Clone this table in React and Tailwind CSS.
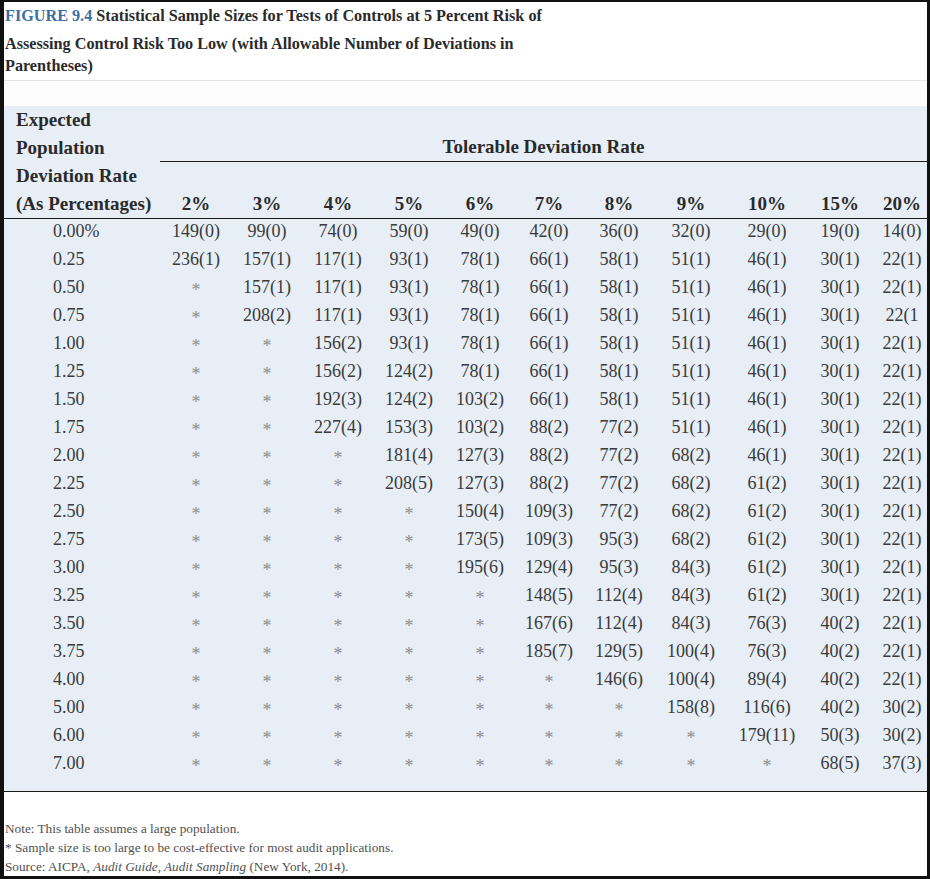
import React from "react";

const cols = ["2%", "3%", "4%", "5%", "6%", "7%", "8%", "9%", "10%", "15%", "20%"];

const rows = [
  ["0.00%", "149(0)", "99(0)", "74(0)", "59(0)", "49(0)", "42(0)", "36(0)", "32(0)", "29(0)", "19(0)", "14(0)"],
  ["0.25", "236(1)", "157(1)", "117(1)", "93(1)", "78(1)", "66(1)", "58(1)", "51(1)", "46(1)", "30(1)", "22(1)"],
  ["0.50", "*", "157(1)", "117(1)", "93(1)", "78(1)", "66(1)", "58(1)", "51(1)", "46(1)", "30(1)", "22(1)"],
  ["0.75", "*", "208(2)", "117(1)", "93(1)", "78(1)", "66(1)", "58(1)", "51(1)", "46(1)", "30(1)", "22(1"],
  ["1.00", "*", "*", "156(2)", "93(1)", "78(1)", "66(1)", "58(1)", "51(1)", "46(1)", "30(1)", "22(1)"],
  ["1.25", "*", "*", "156(2)", "124(2)", "78(1)", "66(1)", "58(1)", "51(1)", "46(1)", "30(1)", "22(1)"],
  ["1.50", "*", "*", "192(3)", "124(2)", "103(2)", "66(1)", "58(1)", "51(1)", "46(1)", "30(1)", "22(1)"],
  ["1.75", "*", "*", "227(4)", "153(3)", "103(2)", "88(2)", "77(2)", "51(1)", "46(1)", "30(1)", "22(1)"],
  ["2.00", "*", "*", "*", "181(4)", "127(3)", "88(2)", "77(2)", "68(2)", "46(1)", "30(1)", "22(1)"],
  ["2.25", "*", "*", "*", "208(5)", "127(3)", "88(2)", "77(2)", "68(2)", "61(2)", "30(1)", "22(1)"],
  ["2.50", "*", "*", "*", "*", "150(4)", "109(3)", "77(2)", "68(2)", "61(2)", "30(1)", "22(1)"],
  ["2.75", "*", "*", "*", "*", "173(5)", "109(3)", "95(3)", "68(2)", "61(2)", "30(1)", "22(1)"],
  ["3.00", "*", "*", "*", "*", "195(6)", "129(4)", "95(3)", "84(3)", "61(2)", "30(1)", "22(1)"],
  ["3.25", "*", "*", "*", "*", "*", "148(5)", "112(4)", "84(3)", "61(2)", "30(1)", "22(1)"],
  ["3.50", "*", "*", "*", "*", "*", "167(6)", "112(4)", "84(3)", "76(3)", "40(2)", "22(1)"],
  ["3.75", "*", "*", "*", "*", "*", "185(7)", "129(5)", "100(4)", "76(3)", "40(2)", "22(1)"],
  ["4.00", "*", "*", "*", "*", "*", "*", "146(6)", "100(4)", "89(4)", "40(2)", "22(1)"],
  ["5.00", "*", "*", "*", "*", "*", "*", "*", "158(8)", "116(6)", "40(2)", "30(2)"],
  ["6.00", "*", "*", "*", "*", "*", "*", "*", "*", "179(11)", "50(3)", "30(2)"],
  ["7.00", "*", "*", "*", "*", "*", "*", "*", "*", "*", "68(5)", "37(3)"],
];

const grid =
  "grid grid-cols-[156px_72px_70px_72px_70px_72px_66px_74px_70px_82px_64px_55px]";
const rightGrid =
  "grid grid-cols-[72px_70px_72px_70px_72px_66px_74px_70px_82px_64px_55px]";

export default function App() {
  return (
    <div
      className="w-[930px] h-[879px] overflow-hidden bg-white border-t-2 border-l-4 border-r-[3px] border-b-[3px] border-[#111]"
      style={{ fontFamily: '"Liberation Serif", "Times New Roman", serif' }}
    >
      <div className="pl-[1px] text-[16.2px] font-bold text-[#2a2a2a] border-b border-[#e4e4e4] h-[79px] whitespace-nowrap">
        <div className="leading-[28px]">
          <span className="text-[#3d6fa3]">FIGURE 9.4</span> Statistical Sample Sizes for Tests of Controls at 5 Percent Risk of
        </div>
        <div className="leading-[28px]">
          Assessing Control Risk Too Low (with Allowable Number of Deviations in
        </div>
        <div className="leading-[16px]">Parentheses)</div>
      </div>
      <div className="h-[26px] bg-[#fdfdfd]" />
      <div className="bg-[#e7eef6] pb-[14px] border-b border-[#1a1a1a]">
        <div className="-mt-[1px] flex border-b border-[#1a1a1a] text-[19px] font-bold text-[#2a2a2a]">
          <div className="w-[156px] shrink-0 pl-[12px] leading-[28px] whitespace-nowrap">
            <div>Expected</div>
            <div>Population</div>
            <div>Deviation Rate</div>
            <div>(As Percentages)</div>
          </div>
          <div className="flex-1 flex flex-col">
            <div className="h-[56px] flex items-end justify-center leading-[28px] border-b border-[#1a1a1a]">
              Tolerable Deviation Rate
            </div>
            <div className={`${rightGrid} h-[56px] items-end leading-[28px]`}>
              {cols.map((c, i) => (
                <div key={c} className={i === 10 ? "text-center pl-[5px]" : "text-center"}>
                  {c}
                </div>
              ))}
            </div>
          </div>
        </div>
        <div className="-mt-[2px] text-[18px] text-[#3a3a3a]">
          {rows.map((r) => (
            <div key={r[0]} className={`${grid} h-[28px] leading-[28px]`}>
              <div className="pl-[49px]">{r[0]}</div>
              {r.slice(1).map((v, i) =>
                v === "*" ? (
                  <div key={i} className={i === 10 ? "text-center pl-[5px] text-[#8c8c8c]" : "text-center text-[#8c8c8c]"}>
                    <span className="inline-block translate-y-[3px]">*</span>
                  </div>
                ) : (
                  <div key={i} className={i === 10 ? "text-center pl-[5px]" : "text-center"}>
                    {v}
                  </div>
                )
              )}
            </div>
          ))}
        </div>
      </div>
      <div className="pt-[27px] pl-[1px] text-[13.25px] leading-[19px] text-[#505050]">
        <div>Note: This table assumes a large population.</div>
        <div>* Sample size is too large to be cost-effective for most audit applications.</div>
        <div>
          Source: AICPA, <i>Audit Guide, Audit Sampling</i> (New York, 2014).
        </div>
      </div>
    </div>
  );
}
